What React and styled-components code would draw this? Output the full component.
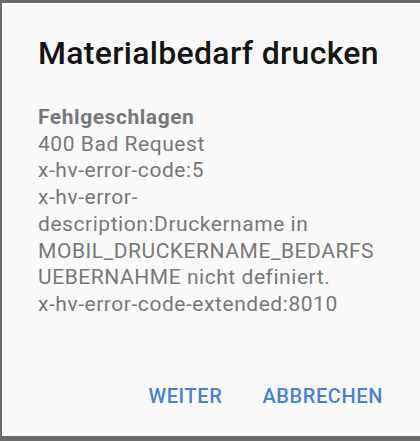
import React from "react";
import styled, { createGlobalStyle } from "styled-components";

const Global = createGlobalStyle`
  html, body {
    margin: 0;
    padding: 0;
    background: #6c6c6c;
  }
  body {
    font-family: Roboto, "Noto Sans", "Liberation Sans", sans-serif;
  }
`;

const Screen = styled.div`
  width: 420px;
  height: 441px;
  padding: 3px 4px 5px 2px;
  box-sizing: border-box;
  display: flex;
`;

const Dialog = styled.div`
  flex: 1;
  background: #fafafa;
  padding: 30px 37px 28px 36px;
  display: flex;
  flex-direction: column;
  box-sizing: border-box;
`;

const Title = styled.h1`
  margin: 0 0 31px;
  font-size: 32px;
  line-height: 40px;
  font-weight: 500;
  letter-spacing: 0.3px;
  color: #141414;
  white-space: nowrap;
`;

const Message = styled.div`
  font-size: 21px;
  line-height: 26.7px;
  letter-spacing: 0.55px;
  color: #777777;
  overflow-wrap: anywhere;
  width: 345px;
`;

const Strong = styled.div`
  font-weight: 700;
`;

const Actions = styled.div`
  margin-top: auto;
  display: flex;
  justify-content: flex-end;
  gap: 40px;
`;

const ActionButton = styled.button`
  border: none;
  background: none;
  padding: 0;
  margin: 0;
  font-family: inherit;
  font-size: 20px;
  line-height: 24px;
  font-weight: 500;
  color: #4a7fd6;
  letter-spacing: 0.6px;
  cursor: pointer;
`;

export default function App() {
  return (
    <>
      <Global />
      <Screen>
        <Dialog>
          <Title>Materialbedarf drucken</Title>
          <Message>
            <Strong>Fehlgeschlagen</Strong>
            <div>400 Bad Request</div>
            <div>x-hv-error-code:5</div>
            <div>
              x-hv-error-description:Druckername in
              MOBIL_DRUCKERNAME_BEDARFSUEBERNAHME nicht definiert.
            </div>
            <div>x-hv-error-code-extended:8010</div>
          </Message>
          <Actions>
            <ActionButton>WEITER</ActionButton>
            <ActionButton>ABBRECHEN</ActionButton>
          </Actions>
        </Dialog>
      </Screen>
    </>
  );
}
